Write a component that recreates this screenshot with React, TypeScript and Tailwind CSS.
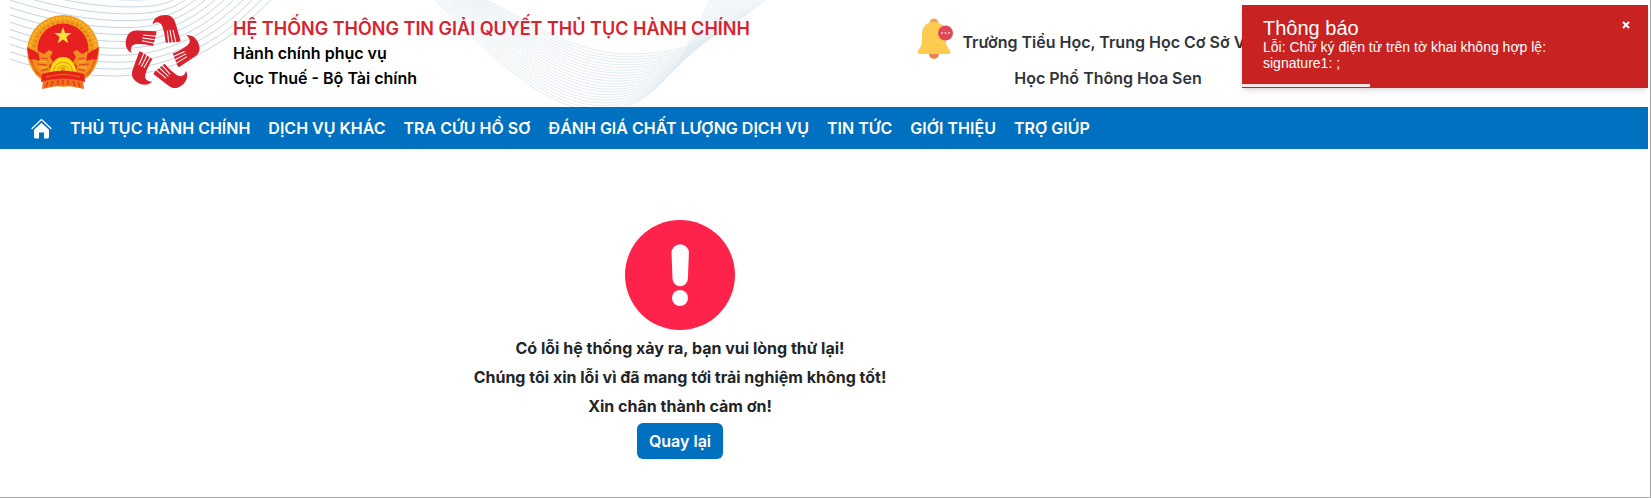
import React from "react";

type Curve = number[];

const lerpCurves = (from: Curve, to: Curve, count: number): string[] =>
  Array.from({ length: count }, (_, i) => {
    const t = i / (count - 1);
    const p = from.map((v, k) => (v + (to[k] - v) * t).toFixed(1));
    return `M${p[0]} ${p[1]}C${p.slice(2, 8).join(" ")}S${p.slice(8).join(" ")}`;
  });

const leftWave = lerpCurves(
  [10, -22, 60, -6, 100, 0, 130, 0, 165, -2, 178, -8],
  [10, 59, 40, 70, 80, 76, 115, 76, 215, 62, 278, -8],
  12,
);

const centerWave = lerpCurves(
  [478, -4, 530, 20, 570, 54, 630, 54, 720, 36, 770, -4],
  [431, -4, 490, 55, 545, 111, 600, 111, 684, 60, 712, -4],
  22,
);

function HeaderWaves() {
  return (
    <svg className="absolute inset-0 h-full w-full" fill="none" aria-hidden="true">
      <g stroke="#c6d4e0" strokeWidth="1">
        {leftWave.map((d) => (
          <path key={d} d={d} />
        ))}
      </g>
      <g stroke="#e4ecf3" strokeWidth="1">
        {centerWave.map((d) => (
          <path key={d} d={d} />
        ))}
      </g>
    </svg>
  );
}

function Emblem() {
  return (
    <svg className="h-[76px] w-[74px]" viewBox="0 0 74 76" role="img" aria-label="Quốc huy">
      <circle cx="37" cy="37" r="36" fill="#f29d1e" />
      <circle cx="37" cy="37" r="33" fill="none" stroke="#fbc02a" strokeWidth="2" strokeDasharray="2 2" />
      <circle cx="37" cy="37" r="29" fill="none" stroke="#e2761a" strokeWidth="2" strokeDasharray="2 3" />
      <circle cx="37" cy="35" r="25.500" fill="#e8201f" />
      <path d="M1 33l14 8 2 9-14-5zM73 33l-14 8-2 9 14-5z" fill="#e8201f" />
      <path d="M3 45l13 5 4 16-10-6zM71 45l-13 5-4 16 10-6z" fill="#ec651c" />
      <path d="M12 37l6 3 5-4 4 2-3 5 3 5-4 4 2 8-8 3-8-9-3-9 8 2zM62 37l-6 3-5-4-4 2 3 5-3 5 4 4-2 8 8 3 8-9 3-9-8 2z" fill="#f0901e" />
      <path d="M15 44l7 1M11 50l10 1M15 57l7-2M59 44l-7 1M63 50l-10 1M59 57l-7-2" stroke="#e2401c" strokeWidth="1.200" />
      <path d="M13 47l8 1M13 54l8-1M61 47l-8 1M61 54l-8-1" stroke="#fbc02a" strokeWidth="1" />
      <path d="M37 13l2.100 6 6.500.100-5.200 3.900 1.900 6.200-5.300-3.600-5.300 3.600 1.900-6.200-5.200-3.900 6.500-.1z" fill="#ffe23a" />
      <path d="M24 58a13 15 0 0 1 26 0z" fill="#fedd16" />
      <path d="M27.500 58a9.500 10 0 0 1 19 0M31 58a6 6.500 0 0 1 12 0" fill="none" stroke="#f0a01c" strokeWidth="1.200" />
      <circle cx="37" cy="55" r="2.500" fill="#f0a01c" />
      <path d="M16 60q21-7 42 0l1 8q-22-5-44 0z" fill="#e8201f" />
      <path d="M20 63q17-5 34 0" fill="none" stroke="#f0761c" strokeWidth="1.200" />
      <path d="M17 67q20-5 40 0l1 8-10-2q-11-3-22 0l-10 2z" fill="#ee701c" />
      <path d="M22 68l-2 5M27 67l-2 5M32 66v5M37 66v5M42 66v5M47 67l2 5M52 68l2 5" stroke="#e3301c" strokeWidth="1.200" />
    </svg>
  );
}

function HandsLogo() {
  return (
    <svg className="h-[76px] w-[71px] overflow-visible" viewBox="30 27 213 228" role="img" aria-label="Hành chính phục vụ">
      {[0, 72, 144, 216, 288].map((angle) => (
        <g key={angle} transform={`rotate(${angle} 137 144)`}>
          <path
            d="M110 55C114 38 130 29 150 30C168 31 175 42 179 56L194 108L187 111L149 113C147 96 145 82 141 70C138 58 132 52 124 52C118 52 114 54 110 58Z"
            fill="#d8232f"
          />
          <path d="M158 114L154 77M169 114L162 75M180 113L171 75" stroke="#fff" strokeWidth="3" />
        </g>
      ))}
    </svg>
  );
}

function BellIcon() {
  return (
    <svg className="h-[42px] w-9" viewBox="0 0 36 42" aria-hidden="true">
      <circle cx="17" cy="5" r="4.500" fill="#f3a35c" />
      <circle cx="17" cy="36" r="5" fill="#ea8350" />
      <path d="M17 4C9 4 5 9 5 16v9c0 3-3 5-4 8-1 2 0 3 2 3h28c2 0 3-1 2-3-1-3-4-5-4-8v-9c0-7-4-12-12-12z" fill="#fdcb50" />
      <circle cx="28.500" cy="15" r="7.500" fill="#e0485a" />
      <path d="M24 15h2M27.500 15h2M31 15h2" stroke="#f6c3c9" strokeWidth="1.500" />
    </svg>
  );
}

function HomeIcon() {
  return (
    <svg className="h-[21px] w-[21px]" viewBox="0 0 21 21" fill="none" aria-hidden="true">
      <path d="M1 10.500L10.500 1.500 20 10.500" stroke="#fff" strokeWidth="1.200" strokeLinecap="round" strokeLinejoin="round" />
      <path d="M3 11.800l7.500-7 7.500 7V19a1.500 1.500 0 0 1-1.500 1.500H13V14.500H8v6H4.500A1.500 1.500 0 0 1 3 19z" fill="#fff" />
    </svg>
  );
}

const menu = [
  "THỦ TỤC HÀNH CHÍNH",
  "DỊCH VỤ KHÁC",
  "TRA CỨU HỒ SƠ",
  "ĐÁNH GIÁ CHẤT LƯỢNG DỊCH VỤ",
  "TIN TỨC",
  "GIỚI THIỆU",
  "TRỢ GIÚP",
];

function Toast() {
  return (
    <div
      role="alert"
      className="absolute top-[5px] right-[2px] h-[83px] w-[406px] bg-[#c92222] px-[21px] pt-3 font-['Liberation_Sans',sans-serif] font-normal text-white shadow-md"
    >
      <h2 className="text-xl leading-[22px]">Thông báo</h2>
      <p className="w-[310px] text-sm leading-4">Lỗi: Chữ ký điện tử trên tờ khai không hợp lệ: signature1: ;</p>
      <button type="button" aria-label="Đóng" className="absolute top-[14px] right-4 p-0.5">
        <svg className="h-2 w-2" viewBox="0 0 8 8" aria-hidden="true">
          <path d="M1 1l6 6M7 1L1 7" stroke="#fff" strokeWidth="2" />
        </svg>
      </button>
      <div className="absolute bottom-px left-0 h-[3px] w-32 bg-[#fbe6e6]" />
    </div>
  );
}

export default function App() {
  return (
    <div className="relative flex min-h-screen flex-col border-r border-b border-[#a6a6a6] bg-white pr-[2px] font-['Inter',sans-serif] font-semibold text-[#212529]">
      <header className="relative flex h-[107px] shrink-0 items-start overflow-hidden">
        <HeaderWaves />
        <div className="relative flex gap-[26px] pt-[14px] pl-[26px]">
          <Emblem />
          <HandsLogo />
        </div>
        <div className="relative ml-9 w-[684px] pt-4 text-black">
          <h1 className="text-lg leading-[25px] text-[#d8232f]">HỆ THỐNG THÔNG TIN GIẢI QUYẾT THỦ TỤC HÀNH CHÍNH</h1>
          <p className="leading-[25px]">Hành chính phục vụ</p>
          <p className="leading-[25px]">Cục Thuế - Bộ Tài chính</p>
        </div>
        <div className="relative flex pt-[18px]">
          <BellIcon />
          <p className="w-[310px] pt-[6px] text-center leading-9 text-[#2f343a]">
            Trường Tiểu Học, Trung Học Cơ Sở Và Học Phổ Thông Hoa Sen
          </p>
        </div>
      </header>
      <nav className="flex h-[42px] shrink-0 items-center gap-[18px] bg-[#0070c0] pl-[31px] text-white">
        <a href="#" aria-label="Trang chủ">
          <HomeIcon />
        </a>
        {menu.map((item) => (
          <a key={item} href="#" className="whitespace-nowrap">
            {item}
          </a>
        ))}
      </nav>
      <main className="flex w-full max-w-[1360px] flex-col items-center pt-[71px] text-center">
        <svg className="h-[110px] w-[110px]" viewBox="0 0 110 110" aria-hidden="true">
          <circle cx="55" cy="55" r="55" fill="#ff224b" />
          <path d="M46.500 33a8.700 8.700 0 0 1 17.400 0l-1 25.500a7.700 7.700 0 0 1-15.400 0z" fill="#fff" />
          <circle cx="55" cy="78" r="8" fill="#fff" />
        </svg>
        <div className="pt-1 leading-[29px] font-bold">
          <p>Có lỗi hệ thống xảy ra, bạn vui lòng thử lại!</p>
          <p>Chúng tôi xin lỗi vì đã mang tới trải nghiệm không tốt!</p>
          <p>Xin chân thành cảm ơn!</p>
        </div>
        <button type="button" className="mt-[2px] h-9 rounded-md bg-[#0070c0] px-3 text-white">
          Quay lại
        </button>
      </main>
      <Toast />
    </div>
  );
}
